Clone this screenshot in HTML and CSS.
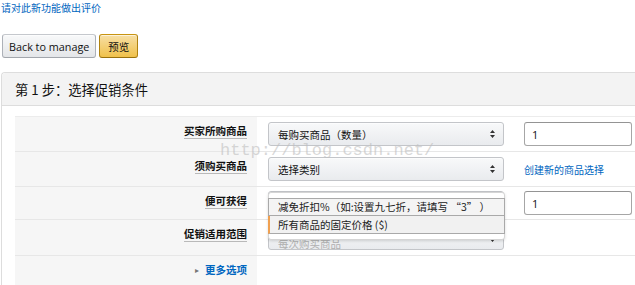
FILE: index.html
```html
<!DOCTYPE html>
<html lang="zh-CN">
<head>
<meta charset="utf-8">
<title>选择促销条件</title>
<link rel="stylesheet" href="styles.css">
</head>
<body>
<a class="feedback" href="#">请对此新功能做出评价</a>
<div class="actions">
  <button class="btn">Back to manage</button>
  <button class="btn btn-primary">预览</button>
</div>
<section class="panel">
  <h2 class="panel-head">第 1 步：选择促销条件</h2>
  <div class="panel-body">
    <div class="form">
      <div class="row row-a">
        <div class="label"><span class="term">买家所购商品</span></div>
        <div class="field">
          <div class="select">每购买商品（数量）<svg class="arrows" width="5" height="8" viewBox="0 0 5 8"><path d="M2.5 0L5 3H0z M2.5 8L5 5H0z" fill="#333"/></svg></div>
          <div class="input">1</div>
        </div>
      </div>
      <div class="row row-b">
        <div class="label"><span class="term">须购买商品</span></div>
        <div class="field">
          <div class="select">选择类别<svg class="arrows" width="5" height="8" viewBox="0 0 5 8"><path d="M2.5 0L5 3H0z M2.5 8L5 5H0z" fill="#333"/></svg></div>
          <a class="link" href="#">创建新的商品选择</a>
        </div>
      </div>
      <div class="row row-c">
        <div class="label"><span class="term">便可获得</span></div>
        <div class="field">
          <div class="select"></div>
          <div class="input">1</div>
          <div class="dropdown">
            <div class="option">减免折扣%（如:设置九七折，请填写 “3” ）</div>
            <div class="option option-active">所有商品的固定价格 ($)</div>
          </div>
        </div>
      </div>
      <div class="row row-d">
        <div class="label"><span class="term">促销适用范围</span></div>
        <div class="field">
          <div class="select select-faded"><span class="faded-text">每次购买商品</span><svg class="arrows" width="5" height="8" viewBox="0 0 5 8"><path d="M2.5 0L5 3H0z M2.5 8L5 5H0z" fill="#333"/></svg></div>
        </div>
      </div>
      <div class="row row-e">
        <div class="label label-more"><span class="caret">▸</span><a class="more" href="#">更多选项</a></div>
        <div class="field"></div>
      </div>
    </div>
  </div>
</section>
<div class="watermark">http://blog.csdn.net/</div>
</body>
</html>
```

FILE: styles.css
```css
html, body {
  margin: 0;
  padding: 0;
  overflow: hidden;
  background: #fff;
}
body {
  font-family: "Noto Sans CJK SC", "Open Sans", sans-serif;
  color: #111;
  font-size: 10.5px;
  position: relative;
  height: 285px;
}
.feedback {
  display: block;
  margin: 1px 0 0 1px;
  font-size: 10px;
  line-height: 14px;
  color: #0066c0;
  text-decoration: none;
}
.actions {
  display: flex;
  gap: 3px;
  margin: 19px 0 0 2px;
}
.btn {
  height: 24px;
  padding: 0 6px;
  border: 1px solid #adb1b8;
  border-color: #c5c8cd #adb1b8 #a2a6ac;
  border-radius: 3px;
  background: linear-gradient(#f8f9fa, #e4e6e9);
  font-family: "Open Sans", "Noto Sans CJK SC", sans-serif;
  font-size: 10.8px;
  color: #111;
  box-shadow: inset 0 1px 0 rgba(255,255,255,.6);
}
.btn-primary {
  padding: 0 8px;
  border-color: #c89411 #b0820f #99710d;
  background: linear-gradient(#f7dfa5, #f0c14b);
  font-family: "Noto Sans CJK SC", sans-serif;
  font-size: 10.5px;
}
.panel {
  margin: 14px -30px 0 1px;
  border: 1px solid #dddddd;
  border-right: none;
  border-bottom: none;
  border-radius: 4px 0 0 0;
}
.panel-head {
  margin: 0;
  height: 32px;
  padding-left: 13px;
  display: flex;
  align-items: center;
  background: #f3f3f3;
  border-bottom: 1px solid #dddddd;
  border-radius: 4px 0 0 0;
  font-size: 13.3px;
  font-weight: normal;
  color: #111;
}
.panel-body {
  padding: 10px 0 0 13px;
}
.form {
  border-top: 1px solid #ececec;
}
.row {
  display: grid;
  grid-template-columns: 242px 1fr;
  border-bottom: 1px solid #e7e7e7;
}
.row-a { height: 34px; }
.row-b { height: 34px; }
.row-c { height: 32px; }
.row-d { height: 35px; }
.row-e { height: 40px; border-bottom: none; }
.label {
  background: #f6f6f6;
  text-align: right;
  padding: 6px 10px 0 0;
  font-weight: bold;
  line-height: 16px;
}
.term {
  border-bottom: 1px solid #b9b9b9;
}
.label-more {
  padding-top: 6px;
}
.caret {
  color: #777;
  font-size: 8px;
  margin-right: 6px;
  vertical-align: 1px;
  font-weight: normal;
}
.more {
  color: #0066c0;
  text-decoration: none;
}
.field {
  position: relative;
  display: flex;
  align-items: center;
  padding-left: 11px;
}
.select {
  box-sizing: border-box;
  width: 236px;
  height: 24px;
  display: flex;
  align-items: center;
  padding-left: 9px;
  border: 1px solid #c3c5c9;
  border-radius: 3px;
  background: linear-gradient(#f8f9fa, #e9ebee);
  box-shadow: 0 1px 0 rgba(255,255,255,.5) inset;
  position: relative;
  white-space: nowrap;
}
.select-faded {
  color: #b0b0b0;
  overflow: hidden;
}
.faded-text {
  display: block;
  height: 24px;
  line-height: 30px;
  margin-top: 6px;
}
.arrows {
  position: absolute;
  right: 8px;
  top: 7px;
}
.input {
  box-sizing: border-box;
  margin-left: 20px;
  width: 108px;
  height: 24px;
  padding-left: 7px;
  display: flex;
  align-items: center;
  border: 1px solid #a6a6a6;
  border-top-color: #949494;
  border-radius: 3px;
  background: #fff;
  font-family: "Open Sans", sans-serif;
  font-size: 11px;
}
.link {
  margin-left: 20px;
  color: #0066c0;
  font-size: 10px;
  text-decoration: none;
}
.dropdown {
  position: absolute;
  left: 11px;
  top: 5px;
  box-sizing: border-box;
  width: 237px;
  height: 48px;
  padding-top: 5px;
  background: #fff;
  border: 1px solid #d5d5d5;
  border-radius: 3px;
  box-shadow: 0 1px 3px rgba(0,0,0,.15);
  z-index: 2;
}
.option {
  box-sizing: border-box;
  height: 18px;
  line-height: 16px;
  padding-left: 9px;
  margin-left: -1px;
  margin-right: -1px;
  border: 1px solid #a9a9a9;
  background: #f4f4f4;
  color: #222;
  white-space: nowrap;
}
.option-active {
  border-top: none;
  border-left: 2px solid #f0a050;
  padding-left: 8px;
  line-height: 17px;
  background: #f1f1f1;
}
.watermark {
  position: absolute;
  left: 220px;
  top: 141px;
  font-family: "Liberation Mono", monospace;
  font-size: 17px;
  color: rgba(190,190,190,0.6);
  pointer-events: none;
  z-index: 3;
  white-space: nowrap;
}
```
